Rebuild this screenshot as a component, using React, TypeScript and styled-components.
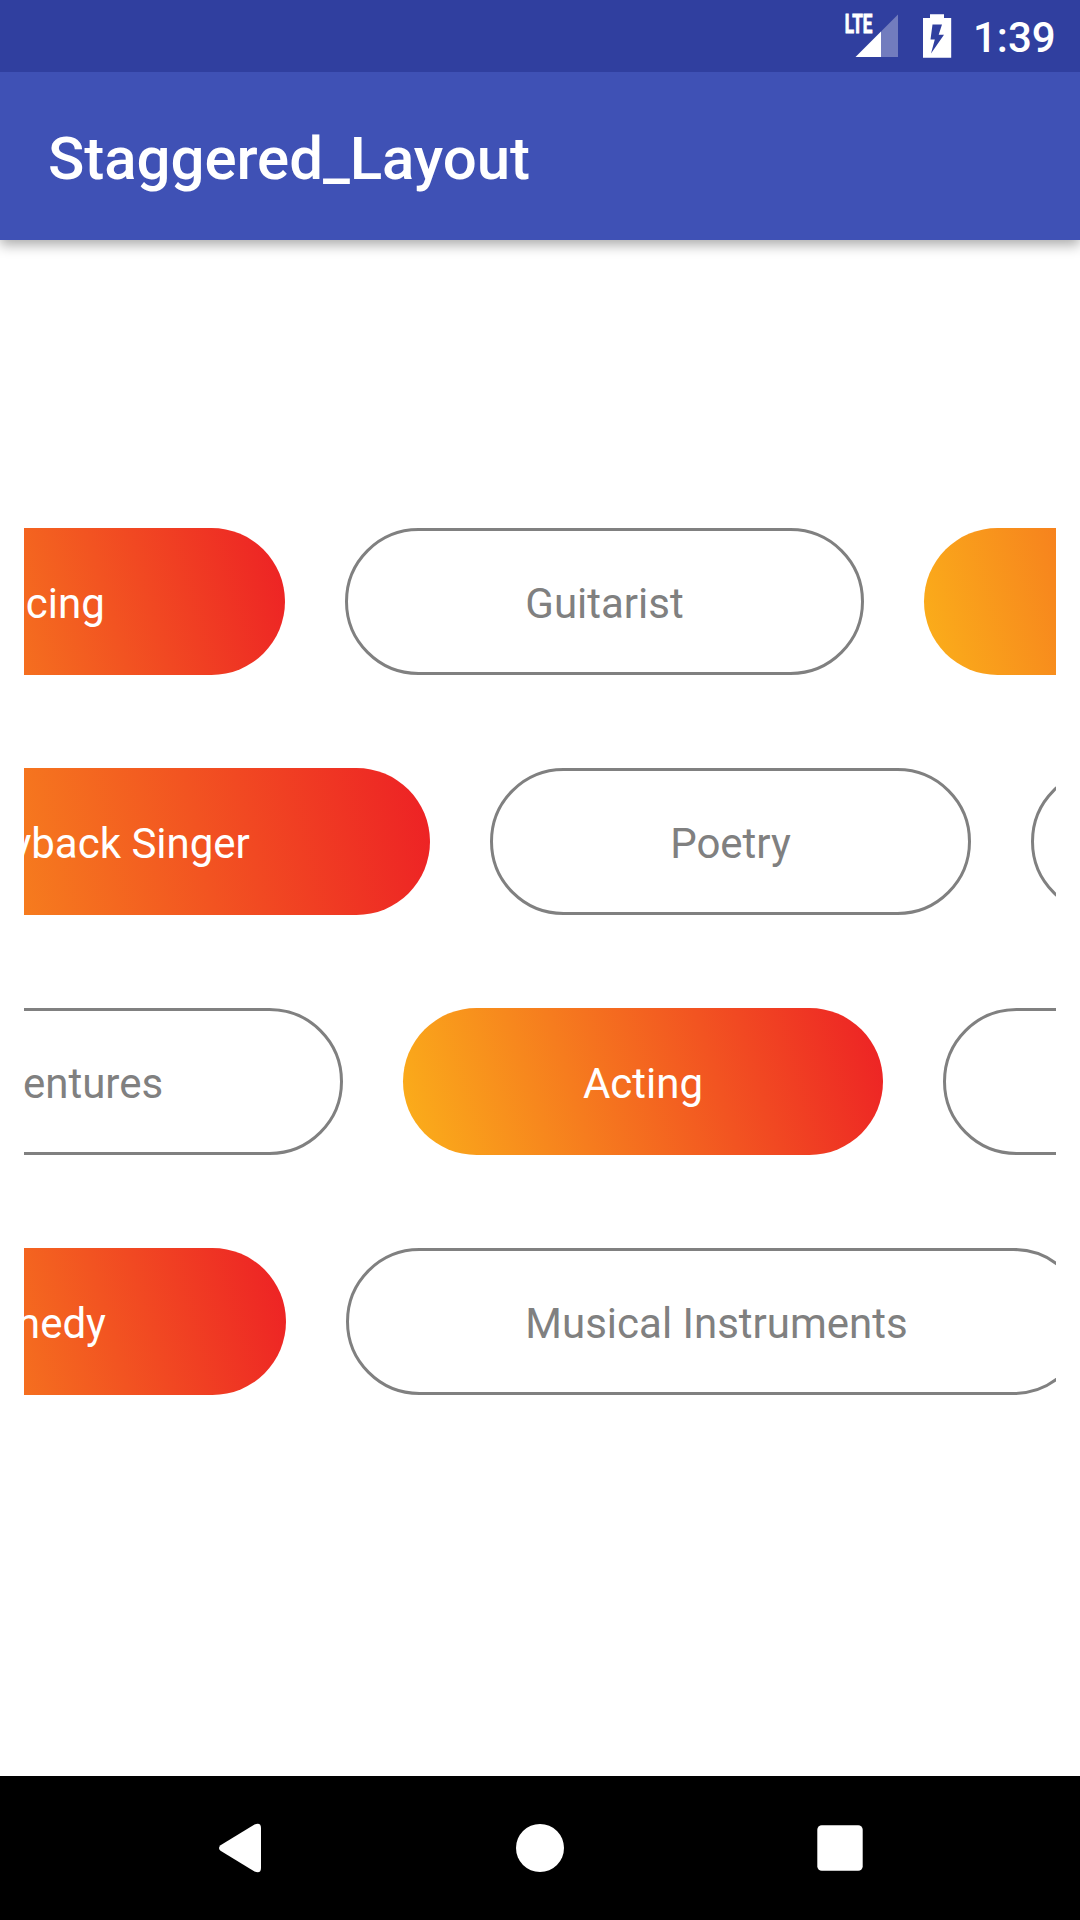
import React from "react";
import styled, { createGlobalStyle } from "styled-components";

const PILL_HEIGHT = 147;

const GlobalStyle = createGlobalStyle`
  html, body { margin: 0; padding: 0; background: #fff; }
  * { box-sizing: border-box; }
`;

const Screen = styled.div`
  width: 1080px;
  height: 1920px;
  display: flex;
  flex-direction: column;
  overflow: hidden;
  background: #fff;
  font-family: Roboto, "Noto Sans", sans-serif;
`;

const StatusBar = styled.header`
  flex: none;
  z-index: 1;
  height: 72px;
  display: flex;
  justify-content: flex-end;
  background: #303f9f;
  padding-right: 24px;
`;

const StatusIcons = styled.svg`
  flex: none;
  display: block;
  margin-right: 13px;
`;

const Clock = styled.time`
  width: 83px;
  padding-top: 13px;
  font-size: 42px;
  line-height: 50px;
  font-weight: 500;
  color: #fff;
  white-space: nowrap;
`;

const AppBar = styled.div`
  flex: none;
  height: 168px;
  display: flex;
  align-items: center;
  padding: 6px 48px 0;
  background: #3f51b5;
  box-shadow: 0 5px 12px rgba(0, 0, 0, 0.33);
`;

const Title = styled.h1`
  margin: 0;
  font-size: 60px;
  line-height: 70px;
  font-weight: 500;
  letter-spacing: -0.06px;
  color: #fff;
`;

const Content = styled.main`
  flex: 1;
  display: flex;
  flex-direction: column;
  gap: 93px;
  margin: 0 24px;
  padding-top: 288px;
  overflow: hidden;
`;

const Track = styled.div`
  flex: none;
  display: flex;
  gap: 60px;
  margin-left: -252px;
`;

const Pill = styled.div<{ $width: number; $selected?: boolean }>`
  flex: none;
  width: ${(p) => p.$width}px;
  height: ${PILL_HEIGHT}px;
  display: flex;
  align-items: center;
  justify-content: center;
  padding-top: 4px;
  border-radius: 75px;
  border: ${(p) => (p.$selected ? "none" : "3px solid #808080")};
  background: ${(p) =>
    p.$selected
      ? `linear-gradient(${Math.atan2(p.$width, PILL_HEIGHT)}rad, #fbb01a, #ed2025)`
      : "transparent"};
  color: ${(p) => (p.$selected ? "#fff" : "#808080")};
  font-size: 42px;
  line-height: 50px;
  white-space: nowrap;
`;

const NavBar = styled.nav`
  flex: none;
  height: 144px;
  display: flex;
  align-items: center;
  justify-content: center;
  gap: 200px;
  background: #000;
`;

const NavButton = styled.button`
  width: 100px;
  height: 100px;
  padding: 0;
  border: 0;
  background: none;
  svg { display: block; }
`;

type Item = { label?: string; width: number; selected?: boolean };

const rows: Item[][] = [
  [
    { label: "Dancing", width: 513, selected: true },
    { label: "Guitarist", width: 519 },
    { width: 510, selected: true },
  ],
  [
    { label: "Playback Singer", width: 658, selected: true },
    { label: "Poetry", width: 481 },
    { width: 500 },
  ],
  [
    { label: "Adventures", width: 571 },
    { label: "Acting", width: 480, selected: true },
    { width: 500 },
  ],
  [
    { label: "Comedy", width: 514, selected: true },
    { label: "Musical Instruments", width: 741 },
  ],
];

export default function App() {
  return (
    <Screen>
      <GlobalStyle />
      <StatusBar>
        <StatusIcons width="120" height="72" viewBox="840 0 120 72">
          <path d="M855.5 57L881 31.5V57Z" fill="#fff" />
          <path d="M881 31.5L898 14.5V57H881Z" fill="#fff" fillOpacity="0.32" />
          <text
            x="844.8"
            y="33.3"
            fill="#fff"
            stroke="#fff"
            strokeWidth="0.9"
            fontFamily="Roboto, sans-serif"
            fontWeight="700"
            fontSize="25.5"
            textLength="27.6"
            lengthAdjust="spacingAndGlyphs"
          >
            LTE
          </text>
          <path
            fillRule="evenodd"
            fill="#fff"
            d="M930 14.3H944V18H951.2V57.8H923V18H930ZM932.5 24.5L930.5 39.5H934.8L931 53.5L944 34.7H938.7L942 24.5Z"
          />
        </StatusIcons>
        <Clock>1:39</Clock>
      </StatusBar>
      <AppBar>
        <Title>Staggered_Layout</Title>
      </AppBar>
      <Content>
        {rows.map((items, r) => (
          <Track key={r}>
            {items.map((item, i) => (
              <Pill key={i} $width={item.width} $selected={item.selected}>
                {item.label}
              </Pill>
            ))}
          </Track>
        ))}
      </Content>
      <NavBar>
        <NavButton aria-label="Back">
          <svg width="100" height="100" viewBox="190 1798 100 100">
            <path
              d="M220.5 1845.2L254.5 1824.5Q261 1822 261 1828V1868Q261 1874 254.5 1871.5L220.5 1850.8Q217.5 1848 220.5 1845.2Z"
              fill="#fff"
            />
          </svg>
        </NavButton>
        <NavButton aria-label="Home">
          <svg width="100" height="100" viewBox="0 0 100 100">
            <circle cx="50" cy="50" r="24" fill="#fff" />
          </svg>
        </NavButton>
        <NavButton aria-label="Overview">
          <svg width="100" height="100" viewBox="0 0 100 100">
            <rect x="27.3" y="27.3" width="45.4" height="45.4" rx="4.5" fill="#fff" />
          </svg>
        </NavButton>
      </NavBar>
    </Screen>
  );
}
